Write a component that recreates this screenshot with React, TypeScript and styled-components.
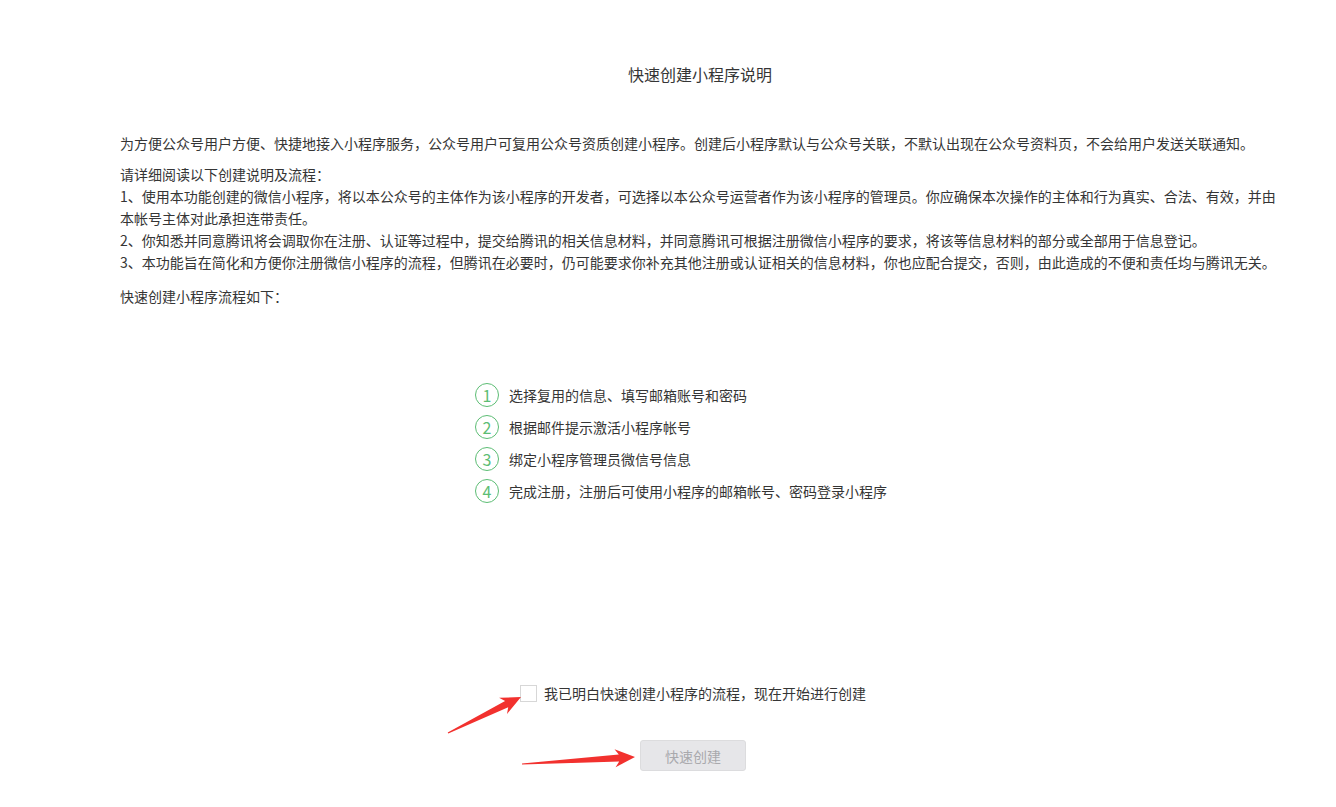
import React from "react";
import styled, { createGlobalStyle } from "styled-components";

const GlobalStyle = createGlobalStyle`
  html, body {
    margin: 0;
    padding: 0;
    background: #ffffff;
  }
  body {
    font-family: "Noto Sans CJK SC", "Noto Sans", sans-serif;
    font-size: 14px;
    color: #353535;
  }
`;

const GREEN = "#5cbd74";
const ARROW_RED = "#f2312e";

const Page = styled.div`
  position: relative;
  width: 1336px;
  min-height: 807px;
  overflow: hidden;
`;

const Content = styled.div`
  width: 1166px;
  margin-left: 120px;
  padding-top: 62px;
`;

const Title = styled.h2`
  margin: 0;
  padding-right: 6px;
  text-align: center;
  font-size: 16px;
  font-weight: normal;
  line-height: 24px;
`;

const Paragraph = styled.p<{ gap: number }>`
  margin: ${({ gap }) => gap}px 0 0;
  line-height: 22px;
`;

const StepList = styled.ol`
  list-style: none;
  margin: 76px 0 0;
  padding: 0 0 0 355px;
  display: flex;
  flex-direction: column;
  gap: 8px;
`;

const StepRow = styled.li`
  display: flex;
  align-items: center;
  gap: 10px;
  height: 24px;
`;

const StepNumber = styled.span`
  box-sizing: border-box;
  width: 24px;
  height: 24px;
  border: 1px solid ${GREEN};
  border-radius: 50%;
  color: ${GREEN};
  font-size: 16px;
  display: flex;
  align-items: center;
  justify-content: center;
  line-height: 1;
`;

const AgreeRow = styled.label`
  display: flex;
  align-items: center;
  gap: 7px;
  margin: 179px 0 0 400px;
  line-height: 22px;
  width: max-content;
  cursor: pointer;
`;

const CheckBox = styled.span`
  box-sizing: border-box;
  width: 17px;
  height: 17px;
  border: 1px solid #d7d7d7;
  background: #fff;
`;

const ButtonRow = styled.div`
  margin: 36px 0 0 520px;
`;

const CreateButton = styled.button`
  box-sizing: border-box;
  width: 106px;
  height: 31px;
  border: 1px solid #dcdcde;
  border-radius: 3px;
  background: #e6e6e9;
  color: #a9a9ad;
  font-family: inherit;
  font-size: 14px;
  cursor: not-allowed;
`;

const Overlay = styled.svg`
  position: absolute;
  left: 0;
  top: 0;
  pointer-events: none;
`;

// tapered "screenshot tool" style arrow
function arrowPoints(
  tx: number,
  ty: number,
  hx: number,
  hy: number,
  headLen = 20,
  headHalf = 9,
  neckHalf = 3.5
) {
  const dx = hx - tx;
  const dy = hy - ty;
  const len = Math.hypot(dx, dy);
  const ux = dx / len;
  const uy = dy / len;
  const nx = -uy;
  const ny = ux;
  const neckX = hx - ux * headLen * 0.8;
  const neckY = hy - uy * headLen * 0.8;
  const baseX = hx - ux * headLen;
  const baseY = hy - uy * headLen;
  const pts = [
    [tx + nx * 0.6, ty + ny * 0.6],
    [neckX + nx * neckHalf, neckY + ny * neckHalf],
    [baseX + nx * headHalf, baseY + ny * headHalf],
    [hx, hy],
    [baseX - nx * headHalf, baseY - ny * headHalf],
    [neckX - nx * neckHalf, neckY - ny * neckHalf],
    [tx - nx * 0.6, ty - ny * 0.6],
  ];
  return pts.map((p) => p.map((v) => v.toFixed(1)).join(",")).join(" ");
}

const steps = [
  "选择复用的信息、填写邮箱账号和密码",
  "根据邮件提示激活小程序帐号",
  "绑定小程序管理员微信号信息",
  "完成注册，注册后可使用小程序的邮箱帐号、密码登录小程序",
];

export default function App() {
  return (
    <Page>
      <GlobalStyle />
      <Content>
        <Title>快速创建小程序说明</Title>
        <Paragraph gap={46}>
          为方便公众号用户方便、快捷地接入小程序服务，公众号用户可复用公众号资质创建小程序。创建后小程序默认与公众号关联，不默认出现在公众号资料页，不会给用户发送关联通知。
        </Paragraph>
        <Paragraph gap={9}>
          请详细阅读以下创建说明及流程：
          <br />
          1、使用本功能创建的微信小程序，将以本公众号的主体作为该小程序的开发者，可选择以本公众号运营者作为该小程序的管理员。你应确保本次操作的主体和行为真实、合法、有效，并由本帐号主体对此承担连带责任。
          <br />
          2、你知悉并同意腾讯将会调取你在注册、认证等过程中，提交给腾讯的相关信息材料，并同意腾讯可根据注册微信小程序的要求，将该等信息材料的部分或全部用于信息登记。
          <br />
          3、本功能旨在简化和方便你注册微信小程序的流程，但腾讯在必要时，仍可能要求你补充其他注册或认证相关的信息材料，你也应配合提交，否则，由此造成的不便和责任均与腾讯无关。
        </Paragraph>
        <Paragraph gap={12}>快速创建小程序流程如下：</Paragraph>

        <StepList>
          {steps.map((s, i) => (
            <StepRow key={i}>
              <StepNumber>{i + 1}</StepNumber>
              <span>{s}</span>
            </StepRow>
          ))}
        </StepList>

        <AgreeRow>
          <CheckBox />
          <span>我已明白快速创建小程序的流程，现在开始进行创建</span>
        </AgreeRow>

        <ButtonRow>
          <CreateButton disabled>快速创建</CreateButton>
        </ButtonRow>
      </Content>

      <Overlay width={1336} height={807}>
        <polygon points={arrowPoints(448, 733, 521, 697)} fill={ARROW_RED} />
        <polygon points={arrowPoints(522, 764, 635, 757)} fill={ARROW_RED} />
      </Overlay>
    </Page>
  );
}
